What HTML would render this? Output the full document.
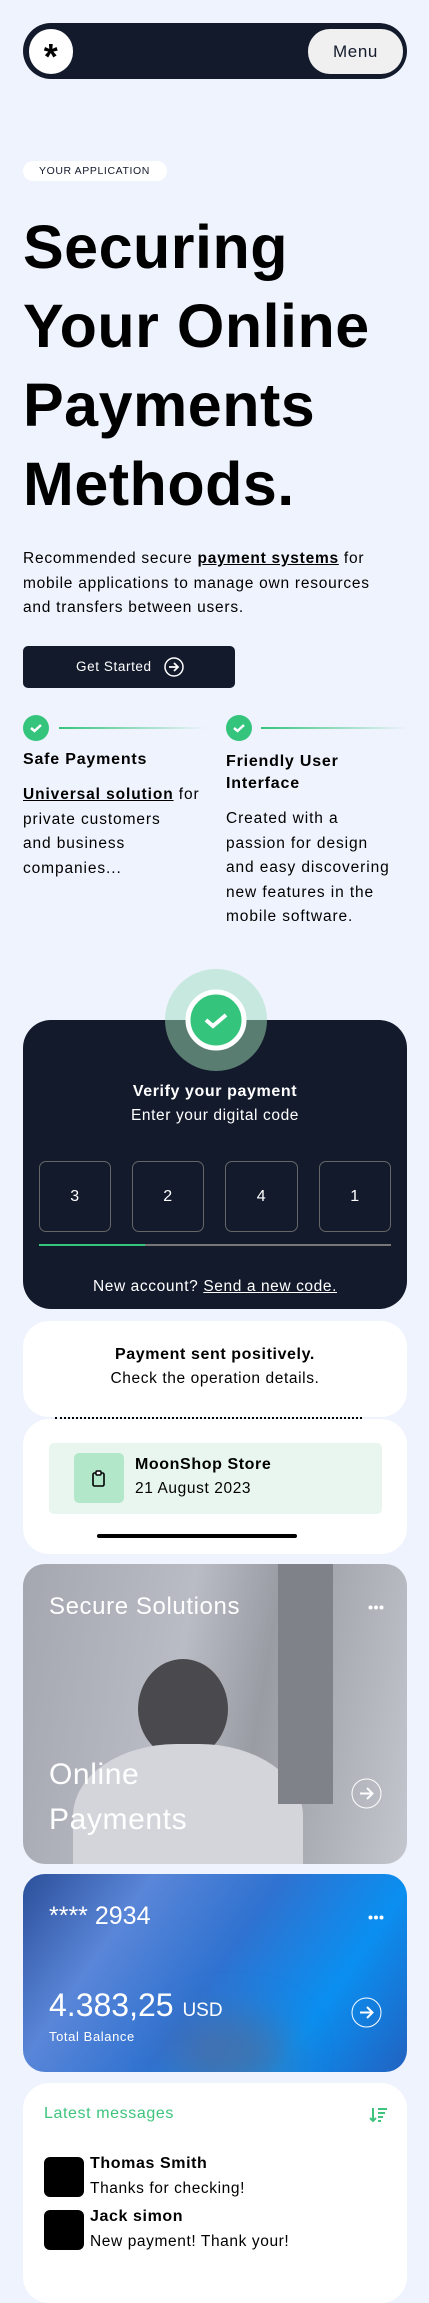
<!DOCTYPE html>
<html><head><meta charset="utf-8"><style>
*{margin:0;padding:0;box-sizing:border-box}
body{width:429px;height:2273px;background:#eff3fd;font-family:"Liberation Sans",sans-serif;color:#000;position:relative;overflow:hidden;letter-spacing:0.6px}
.a{position:absolute;white-space:nowrap}
.c{text-align:center}
</style></head><body>
<div class="a" style="left:23px;top:23px;width:384px;height:56px;background:#131a2c;border-radius:28px"></div>
<div class="a" style="left:29px;top:29px;width:44px;height:45px;background:#fff;border-radius:22px;font-size:36px;font-weight:bold;text-align:center;line-height:56px">*</div>
<div class="a" style="left:308px;top:29px;width:95px;height:45px;background:#f0f0f0;border-radius:22px;font-size:17px;text-align:center;line-height:45px;color:#131a2c">Menu</div>

<div class="a" style="left:23px;top:161px;width:144px;height:20px;background:#fff;border-radius:10px;font-size:10.5px;line-height:20px;padding-left:16px;color:#131a2c">YOUR APPLICATION</div>
<div class="a" style="left:23px;top:208px;font-size:61px;font-weight:bold;line-height:79px;letter-spacing:0.5px">Securing<br>Your Online<br>Payments<br>Methods.</div>
<div class="a" style="left:23px;top:547px;font-size:15.5px;line-height:24.5px;letter-spacing:0.75px">Recommended secure <b><u>payment systems</u></b> for<br>mobile applications to manage own resources<br>and transfers between users.</div>
<div class="a" style="left:23px;top:646px;width:212px;height:42px;background:#131a2c;border-radius:5px;color:#fff;font-size:13.5px;line-height:42px;padding-left:53px">Get Started <svg style="vertical-align:middle;margin-left:8px" width="20" height="20" viewBox="0 0 20 20"><circle cx="10" cy="10" r="9" fill="none" stroke="#fff" stroke-width="1.5"/><path d="M5 10h9M10 6l4 4-4 4" fill="none" stroke="#fff" stroke-width="1.8"/></svg></div>

<svg class="a" style="left:23px;top:715px" width="26" height="26" viewBox="0 0 26 26"><circle cx="13" cy="13" r="13" fill="#34c47c"/><path d="M8 13l3.5 3 6.5-6" fill="none" stroke="#fff" stroke-width="2.5"/></svg>
<div class="a" style="left:59px;top:727px;width:147px;height:2px;background:linear-gradient(90deg,#34c47c,rgba(52,196,124,0))"></div>
<svg class="a" style="left:226px;top:715px" width="26" height="26" viewBox="0 0 26 26"><circle cx="13" cy="13" r="13" fill="#34c47c"/><path d="M8 13l3.5 3 6.5-6" fill="none" stroke="#fff" stroke-width="2.5"/></svg>
<div class="a" style="left:261px;top:727px;width:147px;height:2px;background:linear-gradient(90deg,#34c47c,rgba(52,196,124,0))"></div>
<div class="a" style="left:23px;top:751px;font-size:16px;font-weight:bold;letter-spacing:0.8px">Safe Payments</div>
<div class="a" style="left:23px;top:783px;font-size:15.5px;line-height:24.5px;letter-spacing:0.9px"><b><u>Universal solution</u></b> for<br>private customers<br>and business<br>companies...</div>
<div class="a" style="left:226px;top:751px;font-size:16px;font-weight:bold;line-height:22px;letter-spacing:0.8px">Friendly User<br>Interface</div>
<div class="a" style="left:226px;top:807px;font-size:15.5px;line-height:24.5px;letter-spacing:0.9px">Created with a<br>passion for design<br>and easy discovering<br>new features in the<br>mobile software.</div>

<div class="a" style="left:23px;top:1020px;width:384px;height:289px;background:#131a2c;border-radius:28px"></div>
<div class="a" style="left:165px;top:969px;width:102px;height:102px;border-radius:50%;background:#c6e8de;clip-path:inset(0 0 50% 0)"></div>
<div class="a" style="left:165px;top:969px;width:102px;height:102px;border-radius:50%;background:#5a7d71;clip-path:inset(50% 0 0 0)"></div>
<svg class="a" style="left:185px;top:989px" width="62" height="62" viewBox="0 0 62 62"><circle cx="31" cy="31" r="28" fill="#34c47c" stroke="#fff" stroke-width="5"/><path d="M21 31l7 6 13-11" fill="none" stroke="#fff" stroke-width="4"/></svg>
<div class="a c" style="left:23px;top:1083px;width:384px;color:#fff;font-size:16px;font-weight:bold">Verify your payment</div>
<div class="a c" style="left:23px;top:1107px;width:384px;color:#fff;font-size:15.5px">Enter your digital code</div>
<div class="a" style="left:39px;top:1161px;width:72px;height:71px;border:1px solid #666;border-radius:7px;color:#fff;text-align:center;line-height:69px;font-size:16px">3</div>
<div class="a" style="left:132px;top:1161px;width:72px;height:71px;border:1px solid #666;border-radius:7px;color:#fff;text-align:center;line-height:69px;font-size:16px">2</div>
<div class="a" style="left:225px;top:1161px;width:73px;height:71px;border:1px solid #666;border-radius:7px;color:#fff;text-align:center;line-height:69px;font-size:16px">4</div>
<div class="a" style="left:319px;top:1161px;width:72px;height:71px;border:1px solid #666;border-radius:7px;color:#fff;text-align:center;line-height:69px;font-size:16px">1</div>
<div class="a" style="left:39px;top:1244px;width:352px;height:2px;background:#777"></div>
<div class="a" style="left:39px;top:1244px;width:106px;height:2px;background:#34c47c"></div>
<div class="a c" style="left:23px;top:1278px;width:384px;color:#fff;font-size:15.5px">New account? <u>Send a new code.</u></div>

<div class="a" style="left:23px;top:1321px;width:384px;height:96px;background:#fff;border-radius:26px"></div>
<div class="a c" style="left:23px;top:1346px;width:384px;font-size:16px;font-weight:bold">Payment sent positively.</div>
<div class="a c" style="left:23px;top:1370px;width:384px;font-size:15.5px">Check the operation details.</div>
<div class="a" style="left:55px;top:1417px;width:307px;border-top:2px dotted #000"></div>
<div class="a" style="left:23px;top:1419px;width:384px;height:135px;background:#fff;border-radius:26px"></div>
<div class="a" style="left:49px;top:1443px;width:333px;height:71px;background:#e9f6ef;border-radius:5px"></div>
<div class="a" style="left:74px;top:1453px;width:50px;height:50px;background:#b2e7ca;border-radius:5px"></div>
<svg class="a" style="left:91px;top:1470px" width="16" height="18" viewBox="0 0 16 18"><rect x="2" y="3" width="11" height="13" rx="1.5" fill="none" stroke="#000" stroke-width="1.6"/><rect x="5" y="1" width="5" height="4" rx="1" fill="#fff" stroke="#000" stroke-width="1.4"/></svg>
<div class="a" style="left:135px;top:1456px;font-size:16px;font-weight:bold">MoonShop Store</div>
<div class="a" style="left:135px;top:1480px;font-size:15.5px">21 August 2023</div>
<div class="a" style="left:97px;top:1534px;width:200px;height:4px;background:#000;border-radius:2px"></div>

<div class="a" style="left:23px;top:1564px;width:384px;height:300px;border-radius:22px;overflow:hidden;background:linear-gradient(100deg,#a4a6b0 0%,#babcc5 40%,#9a9ca4 60%,#c4c6cd 100%)">
<div class="a" style="left:115px;top:95px;width:90px;height:100px;border-radius:50%;background:#4a4a4e"></div>
<div class="a" style="left:50px;top:180px;width:230px;height:160px;border-radius:45% 45% 0 0;background:#d4d5db"></div>
<div class="a" style="left:255px;top:0;width:55px;height:240px;background:#808289"></div>
</div>
<div class="a" style="left:49px;top:1593px;color:#fff;font-size:24px">Secure Solutions</div>
<svg class="a" style="left:368px;top:1605px" width="16" height="5" viewBox="0 0 16 5"><circle cx="2.5" cy="2.5" r="2" fill="#fff"/><circle cx="8" cy="2.5" r="2" fill="#fff"/><circle cx="13.5" cy="2.5" r="2" fill="#fff"/></svg>
<div class="a" style="left:49px;top:1752px;color:#fff;font-size:30px;line-height:45px">Online<br>Payments</div>
<svg class="a" style="left:351px;top:1778px" width="31" height="31" viewBox="0 0 31 31"><circle cx="15.5" cy="15.5" r="14.5" fill="none" stroke="#fff" stroke-width="1"/><path d="M9 15.5h12M16 10l5.5 5.5L16 21" fill="none" stroke="#fff" stroke-width="2"/></svg>

<div class="a" style="left:23px;top:1874px;width:384px;height:198px;border-radius:22px;overflow:hidden;background:linear-gradient(125deg,#2b4f9a 0%,#5a86d8 25%,#2f72d0 50%,#0a8ff0 75%,#2262c0 100%)">
<div class="a" style="left:150px;top:140px;width:120px;height:80px;border-radius:50%;background:rgba(100,100,130,0.5);filter:blur(20px)"></div>
</div>
<div class="a" style="left:49px;top:1902px;color:#fff;font-size:25px;letter-spacing:0">**** 2934</div>
<svg class="a" style="left:368px;top:1915px" width="16" height="5" viewBox="0 0 16 5"><circle cx="2.5" cy="2.5" r="2" fill="#fff"/><circle cx="8" cy="2.5" r="2" fill="#fff"/><circle cx="13.5" cy="2.5" r="2" fill="#fff"/></svg>
<div class="a" style="left:49px;top:1987px;color:#fff;font-size:32px;letter-spacing:0">4.383,25 <span style="font-size:19px">USD</span></div>
<div class="a" style="left:49px;top:2029px;color:#fff;font-size:13px">Total Balance</div>
<svg class="a" style="left:351px;top:1997px" width="31" height="31" viewBox="0 0 31 31"><circle cx="15.5" cy="15.5" r="14.5" fill="none" stroke="#fff" stroke-width="1"/><path d="M9 15.5h12M16 10l5.5 5.5L16 21" fill="none" stroke="#fff" stroke-width="2"/></svg>

<div class="a" style="left:23px;top:2083px;width:384px;height:220px;background:#fff;border-radius:26px"></div>
<div class="a" style="left:44px;top:2105px;color:#3ec47c;font-size:16px">Latest messages</div>
<svg class="a" style="left:369px;top:2107px" width="19" height="16" viewBox="0 0 19 16"><path d="M4 1v13M1 11l3 3 3-3" fill="none" stroke="#3ec47c" stroke-width="2"/><path d="M9 2h9M9 6h7M9 10h5M9 14h3" stroke="#3ec47c" stroke-width="2"/></svg>
<div class="a" style="left:44px;top:2157px;width:40px;height:40px;background:#000;border-radius:6px"></div>
<div class="a" style="left:90px;top:2155px;font-size:16px;font-weight:bold">Thomas Smith</div>
<div class="a" style="left:90px;top:2180px;font-size:15.5px">Thanks for checking!</div>
<div class="a" style="left:44px;top:2210px;width:40px;height:40px;background:#000;border-radius:6px"></div>
<div class="a" style="left:90px;top:2208px;font-size:16px;font-weight:bold">Jack simon</div>
<div class="a" style="left:90px;top:2233px;font-size:15.5px">New payment! Thank your!</div>
</body></html>
